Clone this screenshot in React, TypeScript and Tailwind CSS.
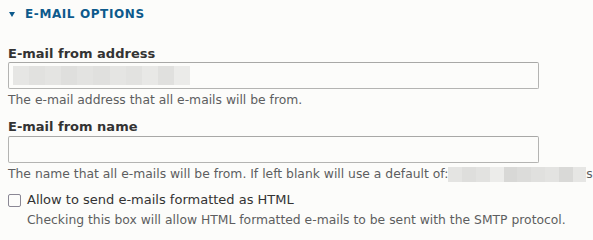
import React from "react";

const blur1 = ["#e6e6e4", "#e1e1df", "#e4e4e2", "#dfdfdd", "#e3e3e1", "#e0e0de", "#e5e5e3", "#e2e2e0", "#e8e8e6", "#e0e0de", "#ebebe9"];
const blur2 = ["#e4e4e2", "#dededc", "#e2e2e0", "#ececea", "#d8d8d6", "#dcdcda", "#e0e0de", "#e3e3e1", "#d9d9d7", "#e6e6e4"];

function Blurred({ colors, className }: { colors: string[]; className: string }) {
  return (
    <span className={`inline-flex ${className}`}>
      {colors.map((c, i) => (
        <span key={i} className="h-full flex-1" style={{ backgroundColor: c }} />
      ))}
    </span>
  );
}

function TextField({ children }: { children?: React.ReactNode }) {
  return (
    <div className="flex h-[27px] w-[531px] items-center rounded-[2px] border border-[#b4b4b2] border-t-[#a8a8a6] bg-[#fcfcfa] pl-[4px]">
      {children}
    </div>
  );
}

export default function App() {
  return (
    <div className="h-screen overflow-hidden bg-[#fcfcfa] font-['DejaVu_Sans',sans-serif] text-[#333]">
      <div className="px-2 pt-[6px]">
        <div className="flex items-center gap-[10px] leading-[16px]">
          <svg width="6" height="5" viewBox="0 0 6 5" className="ml-[1px]">
            <path d="M0 0 L6 0 L3 5 Z" fill="#0d5a8c" />
          </svg>
          <span className="text-[12px] font-bold tracking-[0.05em] text-[#0d5a8c]">E-MAIL OPTIONS</span>
        </div>

        <div className="mt-[24px] text-[13px] font-bold leading-[16px]">E-mail from address</div>
        <TextField>
          <Blurred colors={blur1} className="h-[19px] w-[177px]" />
        </TextField>
        <div className="mt-[3px] text-[12.35px] leading-[16px] text-[#5d5e60]">
          The e-mail address that all e-mails will be from.
        </div>

        <div className="mt-[11px] text-[13px] font-bold leading-[16px]">E-mail from name</div>
        <div className="mt-px">
          <TextField />
        </div>
        <div className="mt-[3px] flex items-center whitespace-nowrap text-[12.35px] leading-[16px] text-[#5d5e60]">
          <span>The name that all e-mails will be from. If left blank will use a default of:</span>
          <Blurred colors={blur2} className="h-[15px] w-[138px] shrink-0" />
          <span>s</span>
        </div>

        <div className="mt-[10px] flex items-center gap-[6px]">
          <span className="h-[13px] w-[13px] shrink-0 rounded-[2px] border-[1.5px] border-[#8a8794] bg-[#fcfcfa]" />
          <span className="text-[13px] leading-[16px] text-[#333]">Allow to send e-mails formatted as HTML</span>
        </div>
        <div className="mt-[4px] pl-[19px] text-[12.35px] leading-[16px] text-[#5d5e60]">
          Checking this box will allow HTML formatted e-mails to be sent with the SMTP protocol.
        </div>
      </div>
    </div>
  );
}
